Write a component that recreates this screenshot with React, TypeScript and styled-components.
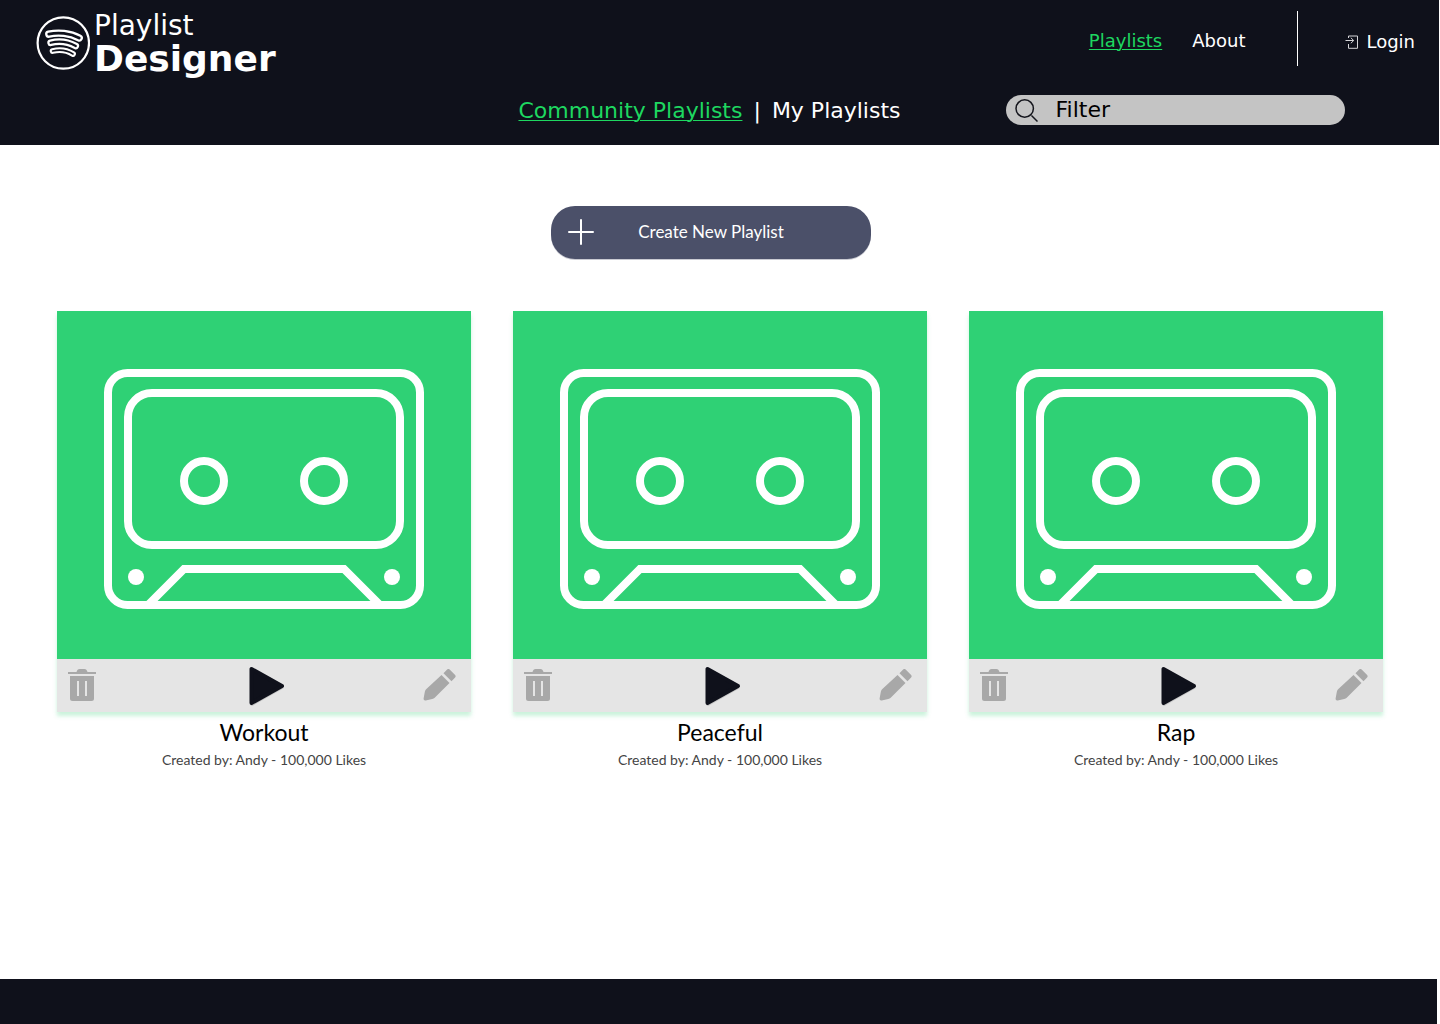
import React from "react";
import styled, { createGlobalStyle } from "styled-components";

const ink = "#0f111b";
const green = "#1ed760";
const displayFont = `"DejaVu Sans", Verdana, sans-serif`;
const bodyFont = `Lato, "Open Sans", sans-serif`;

const GlobalStyle = createGlobalStyle`
  *, *::before, *::after { box-sizing: border-box; }
  body { margin: 0; background: #fff; font-family: ${bodyFont}; }
  button, input { font: inherit; }
`;

const Page = styled.div`
  display: flex;
  flex-direction: column;
  min-height: 100vh;
`;

const Header = styled.header`
  margin-right: 1px;
  padding-bottom: 20px;
  background: ${ink};
  color: #fff;
  font-family: ${displayFont};
`;

const TopBar = styled.div`
  display: flex;
  align-items: flex-start;
  justify-content: space-between;
  padding: 11px 24px 0 36px;
  height: 95px;
`;

const Brand = styled.a`
  display: flex;
  gap: 4px;
  color: inherit;
  text-decoration: none;

  svg {
    margin-top: 5px;
  }
`;

const BrandName = styled.span`
  display: flex;
  flex-direction: column;
`;

const BrandTop = styled.span`
  font-size: 28px;
  line-height: 30px;
`;

const BrandBottom = styled.span`
  font-size: 36px;
  font-weight: 700;
  line-height: 36px;
`;

const MainNav = styled.nav`
  display: flex;
  align-items: center;
  height: 55px;
  font-size: 18px;
  line-height: 24px;
`;

const NavLink = styled.a<{ $active?: boolean }>`
  color: ${(p) => (p.$active ? green : "#fff")};
  text-decoration: ${(p) => (p.$active ? "underline" : "none")};
  text-decoration-thickness: 1px;
  text-underline-offset: 2px;
`;

const NavGroup = styled.div`
  display: flex;
  gap: 30px;
  padding: 4px 52px 0 0;
`;

const LoginLink = styled(NavLink)`
  display: flex;
  align-items: center;
  gap: 7px;
  height: 55px;
  padding: 6px 0 0 47px;
  border-left: 1px solid #fff;
`;

const SubBar = styled.div`
  display: grid;
  grid-template-columns: 1fr auto 1fr;
  align-items: center;
  padding-right: 20px;
`;

const Tabs = styled.nav`
  display: flex;
  grid-column: 2;
  gap: 11px;
  padding-top: 2px;
  font-size: 22px;
  line-height: 28px;
`;

const Search = styled.label`
  display: flex;
  align-items: center;
  gap: 17px;
  width: 339px;
  height: 30px;
  margin-left: 105px;
  padding: 0 9px;
  border-radius: 15px;
  background: #c4c4c4;
`;

const SearchInput = styled.input`
  flex: 1;
  min-width: 0;
  padding: 0;
  border: 0;
  outline: 0;
  background: transparent;
  color: #000;
  font-size: 22px;
  line-height: 28px;

  &::placeholder {
    color: #000;
    opacity: 1;
  }
`;

const Main = styled.main`
  flex: 1;
  padding: 61px 57px 40px;
`;

const CreateRow = styled.div`
  display: flex;
  justify-content: center;
  padding-right: 18px;
  margin-bottom: 52px;
`;

const CreateButton = styled.button`
  display: grid;
  grid-template-columns: 26px 1fr 26px;
  align-items: center;
  width: 320px;
  height: 53px;
  padding: 0 17px 2px;
  border: 0;
  border-radius: 24px;
  background: #4b5069;
  box-shadow: 0 1px 0 rgba(75, 80, 105, 0.3);
  color: #fff;
  font-size: 17px;
  line-height: 24px;
`;

const Grid = styled.div`
  display: grid;
  grid-template-columns: repeat(3, 1fr);
  gap: 42px;
`;

const Card = styled.article`
  text-align: center;
`;

const Cover = styled.div`
  background: #2fd175;
  box-shadow: 0 4px 4px rgba(47, 209, 117, 0.25);
`;

const Art = styled.svg`
  display: block;
  width: 100%;
  height: auto;
`;

const Controls = styled.div`
  display: grid;
  grid-template-columns: 1fr auto 1fr;
  align-items: center;
  height: 53px;
  padding: 0 11px;
  background: #e5e5e5;
`;

const IconButton = styled.button<{ $end?: boolean }>`
  display: flex;
  justify-self: ${(p) => (p.$end ? "end" : "start")};
  padding: 0;
  border: 0;
  background: none;
`;

const Title = styled.h2`
  margin: 5px 0 0;
  color: #000;
  font-size: 23px;
  font-weight: 400;
  line-height: 30px;
`;

const Meta = styled.p`
  margin: 3px 0 0;
  color: #444;
  font-size: 14px;
  line-height: 20px;
`;

const Footer = styled.footer`
  height: 45px;
  margin-right: 3px;
  background: ${ink};
`;

const bands = [
  { d: "M12.8 18.2C22 16 34 17 43.2 22", outer: 7.4, inner: 2.8 },
  { d: "M14.6 26.8C23 24.6 32 25.800 39.800 30", outer: 6.6, inner: 2.2 },
  { d: "M16.600 35C24 33.200 31 34.200 37 38", outer: 5.8, inner: 1.6 },
];

const LogoMark = () => (
  <svg width="54" height="54" viewBox="0 0 54 54" fill="none" aria-hidden="true">
    <circle cx="27.300" cy="27" r="25.700" stroke="#fff" strokeWidth="2.200" />
    {bands.map((b) => (
      <g key={b.d} strokeLinecap="round">
        <path d={b.d} stroke="#fff" strokeWidth={b.outer} />
        <path d={b.d} stroke={ink} strokeWidth={b.inner} />
      </g>
    ))}
  </svg>
);

const LoginIcon = () => (
  <svg width="14" height="14" viewBox="0 0 14 14" fill="none" stroke="#d5d5d8" aria-hidden="true">
    <path d="M3.500 3V1h9v12.300h-9V9" />
    <path d="M.5 5.500h8M5.800 2.700l2.900 2.800-2.900 2.800" />
  </svg>
);

const SearchIcon = () => (
  <svg width="24" height="24" viewBox="0 0 24 24" fill="none" stroke="#15161d" strokeWidth="1.500" aria-hidden="true">
    <circle cx="9.700" cy="10.500" r="8.700" />
    <path d="M16.500 17.500l6 6" />
  </svg>
);

const PlusIcon = () => (
  <svg width="26" height="26" viewBox="0 0 26 26" stroke="#fff" strokeWidth="2" strokeLinecap="round" aria-hidden="true">
    <path d="M13 1v24M1 13h24" />
  </svg>
);

const Cassette = () => (
  <Art viewBox="0 0 414 348" fill="none" stroke="#fff" strokeWidth="8" aria-hidden="true">
    <rect x="51" y="62" width="312" height="232" rx="19.500" />
    <rect x="71" y="82" width="272" height="152" rx="24" />
    <circle cx="147" cy="170" r="20" />
    <circle cx="267" cy="170" r="20" />
    <path d="M92 293l35-35h160l35 35" />
    <g fill="#fff" stroke="none">
      <circle cx="79" cy="266" r="8" />
      <circle cx="335" cy="266" r="8" />
    </g>
  </Art>
);

const TrashIcon = () => (
  <svg width="28" height="34" viewBox="0 0 28 34" fill="#a8a8a8" aria-hidden="true">
    <path d="M0 3h8.500c.6-2 1.500-3 3-3h5c1.500 0 2.400 1 3 3H28v2H0z" />
    <path fillRule="evenodd" d="M2 7h24v22.500a2.500 2.500 0 0 1-2.500 2.500h-19A2.500 2.500 0 0 1 2 29.500zM9 12v15h2V12zM17 12v15h2V12z" />
  </svg>
);

const PlayIcon = () => (
  <svg width="44" height="42" viewBox="-6 0 44 42" aria-hidden="true">
    <path d="M4 5.500v34l30-17z" fill="#999" stroke="#999" strokeWidth="3" strokeLinejoin="round" opacity=".4" />
    <path d="M3.500 4v34L34 21z" fill={ink} stroke={ink} strokeWidth="4" strokeLinejoin="round" />
  </svg>
);

const PencilIcon = () => (
  <svg width="38" height="34" viewBox="-1 1.500 38 34" fill="#a8a8a8" aria-hidden="true">
    <path d="M18.500 7.500l8 8-14.800 14.700q-1 1-2.500 1.400l-6.500 1.300Q.3 33.200.6 31l1.300-7q.3-1.300 1.200-2.200z" />
    <path d="M20.500 5.700l3.400-3.500q1.500-1.500 3 0l5 5q1.500 1.500 0 3l-3.400 3.500z" />
  </svg>
);

const playlists = ["Workout", "Peaceful", "Rap"];

const PlaylistCard = ({ name }: { name: string }) => (
  <Card>
    <Cover>
      <Cassette />
      <Controls>
        <IconButton type="button" aria-label={`Delete ${name}`}>
          <TrashIcon />
        </IconButton>
        <IconButton type="button" aria-label={`Play ${name}`}>
          <PlayIcon />
        </IconButton>
        <IconButton type="button" $end aria-label={`Edit ${name}`}>
          <PencilIcon />
        </IconButton>
      </Controls>
    </Cover>
    <Title>{name}</Title>
    <Meta>Created by: Andy - 100,000 Likes</Meta>
  </Card>
);

export default function App() {
  return (
    <Page>
      <GlobalStyle />
      <Header>
        <TopBar>
          <Brand href="#">
            <LogoMark />
            <BrandName>
              <BrandTop>Playlist</BrandTop>
              <BrandBottom>Designer</BrandBottom>
            </BrandName>
          </Brand>
          <MainNav>
            <NavGroup>
              <NavLink href="#playlists" $active>
                Playlists
              </NavLink>
              <NavLink href="#about">About</NavLink>
            </NavGroup>
            <LoginLink href="#login">
              <LoginIcon />
              Login
            </LoginLink>
          </MainNav>
        </TopBar>
        <SubBar>
          <Tabs>
            <NavLink href="#community" $active>
              Community Playlists
            </NavLink>
            <span>|</span>
            <NavLink href="#mine">My Playlists</NavLink>
          </Tabs>
          <Search>
            <SearchIcon />
            <SearchInput type="text" placeholder="Filter" aria-label="Filter" />
          </Search>
        </SubBar>
      </Header>
      <Main>
        <CreateRow>
          <CreateButton type="button">
            <PlusIcon />
            <span>Create New Playlist</span>
          </CreateButton>
        </CreateRow>
        <Grid>
          {playlists.map((name) => (
            <PlaylistCard key={name} name={name} />
          ))}
        </Grid>
      </Main>
      <Footer />
    </Page>
  );
}
